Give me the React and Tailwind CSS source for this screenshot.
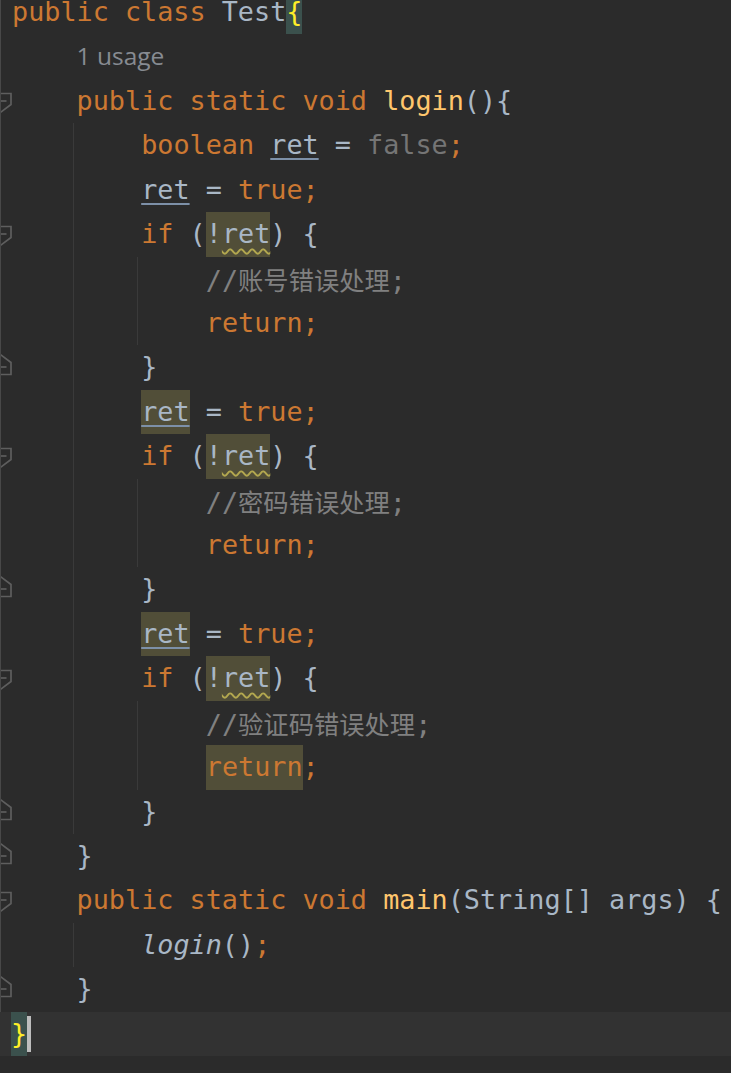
import React from "react";

const MONO = "font-['DejaVu_Sans_Mono','Liberation_Mono',monospace]";

function OpenMark() {
  return (
    <svg width="12" height="44" viewBox="0 0 12 44" className="block">
      <path d="M-2 14.5 H10 V25.5 L-2 34.5" fill="none" stroke="#5e5e5e" strokeWidth="1.7" />
      <path d="M-2 22 H5.5" fill="none" stroke="#5e5e5e" strokeWidth="1.7" />
    </svg>
  );
}

function CloseMark() {
  return (
    <svg width="12" height="44" viewBox="0 0 12 44" className="block">
      <path d="M-2 8.5 L10 17.5 V29.5 H-2" fill="none" stroke="#5e5e5e" strokeWidth="1.7" />
      <path d="M-2 22 H5.5" fill="none" stroke="#5e5e5e" strokeWidth="1.7" />
    </svg>
  );
}

function Row({ mark, guides = [], children, border = true }) {
  return (
    <div className="flex h-[44.43px] items-stretch">
      <div className={border ? "w-[12px] shrink-0 border-l border-[#484848]" : "w-[12px] shrink-0"}>
        {mark === "open" ? <OpenMark /> : null}
        {mark === "close" ? <CloseMark /> : null}
      </div>
      {guides.map((g, i) => (
        <div key={i} className="flex w-[64.6px] shrink-0 justify-end pr-[3px]">
          {g ? <div className="h-full w-px bg-[#3a3a3a]" /> : null}
        </div>
      ))}
      <div className="whitespace-pre leading-[44.43px] text-[#a9b7c6]">{children}</div>
    </div>
  );
}

const K = ({ children }) => <span className="text-[#cc7832]">{children}</span>;
const M = ({ children }) => <span className="text-[#ffc66d]">{children}</span>;
const HL = ({ children }) => <span className="inline-block bg-[#514e38]">{children}</span>;
const U = ({ children }) => (
  <span className="underline decoration-[#7d90a8] decoration-2 underline-offset-[4px]">{children}</span>
);
const W = ({ children }) => (
  <span className="underline decoration-wavy decoration-[#b3a84f] decoration-[1.5px] underline-offset-[5px]">{children}</span>
);

function Comment({ text }) {
  return (
    <span className="text-[#808080]">
      //
      <span className="font-['Noto_Sans_CJK_SC',sans-serif] text-[25.3px]">{text}</span>;
    </span>
  );
}

export default function App() {
  return (
    <div className={`h-[1073px] w-[731px] overflow-hidden bg-[#2b2b2b] ${MONO} text-[26.8px]`}>
      <div className="-mt-[10px]">
        <Row>
          <K>public class </K>Test
          <span className="inline-block bg-[#3b514d] text-[#ffef28]">{"{"}</span>
        </Row>
        <Row guides={[false]}>
          <span className="font-['Open_Sans',sans-serif] text-[24.5px] text-[#878b92]">1 usage</span>
        </Row>
        <Row mark="open" guides={[false]}>
          <K>public static void </K>
          <M>login</M>(){"{"}
        </Row>
        <Row guides={[true, false]}>
          <K>boolean </K>
          <U>ret</U> = <span className="text-[#757575]">false</span>
          <K>;</K>
        </Row>
        <Row guides={[true, false]}>
          <U>ret</U> = <K>true;</K>
        </Row>
        <Row mark="open" guides={[true, false]}>
          <K>if </K>(
          <HL>
            !<W>ret</W>
          </HL>
          ) {"{"}
        </Row>
        <Row guides={[true, true, false]}>
          <Comment text="账号错误处理" />
        </Row>
        <Row guides={[true, true, false]}>
          <K>return;</K>
        </Row>
        <Row mark="close" guides={[true, false]}>
          {"}"}
        </Row>
        <Row guides={[true, false]}>
          <HL>
            <U>ret</U>
          </HL>{" "}
          = <K>true;</K>
        </Row>
        <Row mark="open" guides={[true, false]}>
          <K>if </K>(
          <HL>
            !<W>ret</W>
          </HL>
          ) {"{"}
        </Row>
        <Row guides={[true, true, false]}>
          <Comment text="密码错误处理" />
        </Row>
        <Row guides={[true, true, false]}>
          <K>return;</K>
        </Row>
        <Row mark="close" guides={[true, false]}>
          {"}"}
        </Row>
        <Row guides={[true, false]}>
          <HL>
            <U>ret</U>
          </HL>{" "}
          = <K>true;</K>
        </Row>
        <Row mark="open" guides={[true, false]}>
          <K>if </K>(
          <HL>
            !<W>ret</W>
          </HL>
          ) {"{"}
        </Row>
        <Row guides={[true, true, false]}>
          <Comment text="验证码错误处理" />
        </Row>
        <Row guides={[true, true, false]}>
          <HL>
            <K>return</K>
          </HL>
          <K>;</K>
        </Row>
        <Row mark="close" guides={[true, false]}>
          {"}"}
        </Row>
        <Row mark="close" guides={[false]}>
          {"}"}
        </Row>
        <Row mark="open" guides={[false]}>
          <K>public static void </K>
          <M>main</M>(String[] args) {"{"}
        </Row>
        <Row guides={[true, false]}>
          <span className="italic">login</span>()<K>;</K>
        </Row>
        <Row mark="close" guides={[false]}>
          {"}"}
        </Row>
        <div className="flex h-[44.43px] items-stretch bg-[#323232]">
          <div className="w-[11px] shrink-0" />
          <div className="flex items-center">
            <span className="inline-block h-full bg-[#3b514d] leading-[44.43px] text-[#ffef28]">{"}"}</span>
            <span className="h-[36px] w-[3.5px] bg-[#bdbdbd]" />
          </div>
        </div>
      </div>
    </div>
  );
}
